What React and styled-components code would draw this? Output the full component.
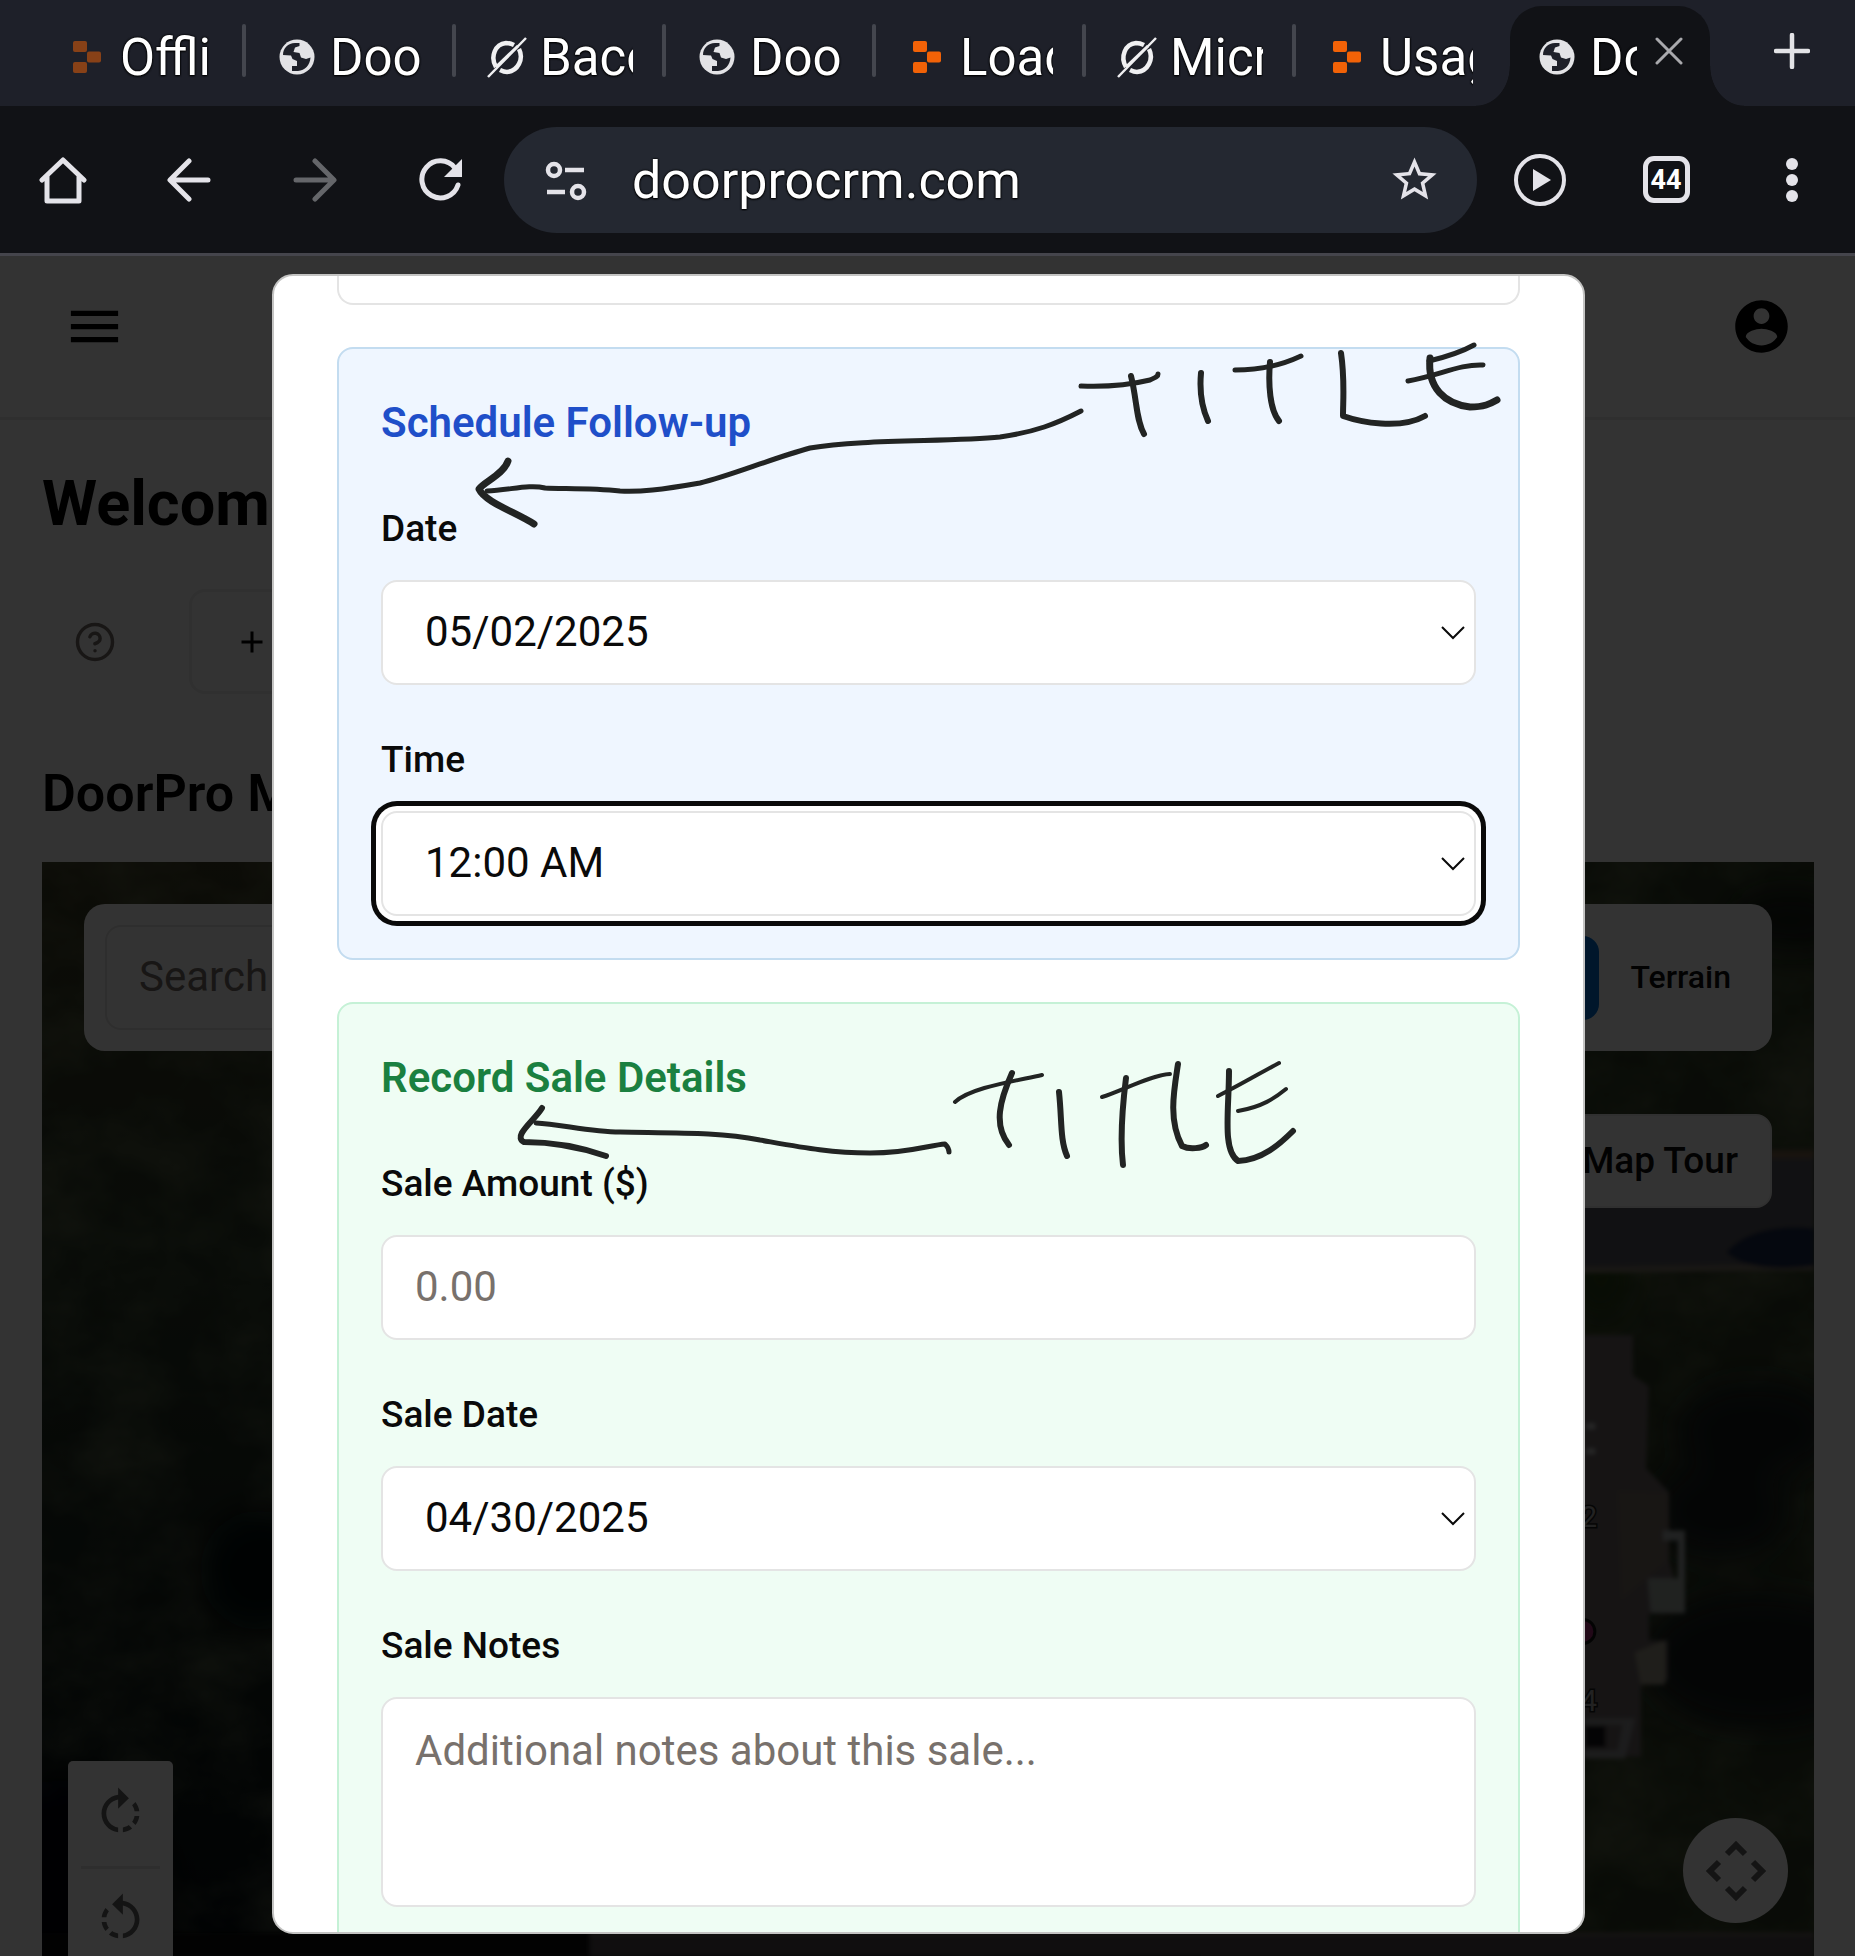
import React from "react";
import styled, { createGlobalStyle, css } from "styled-components";

const Global = createGlobalStyle`
  *, *::before, *::after { box-sizing: border-box; }
  html, body { margin: 0; background: #111216; }
  body { font-family: Roboto, "Liberation Sans", sans-serif; color: #0a0a0a; }
  button, input, select, textarea { font: inherit; color: inherit; margin: 0; }
  button { border: 0; background: none; padding: 0; cursor: pointer; }
  h1, h2, h3 { margin: 0; }
`;

const Screen = styled.div`
  display: flex;
  flex-direction: column;
  height: 100vh;
  overflow: hidden;
`;

/* ---------- browser chrome ---------- */

const outlined = css`
  text-shadow: 0 0 2px #000, 0 0 2px #000, 0 1px 2px #000;
`;

const TabStrip = styled.nav`
  display: flex;
  height: 106px;
  flex: none;
  padding-left: 36px;
  background: #1e2029;
  color: #fff;
`;

const Tab = styled.button`
  display: flex;
  align-items: center;
  width: 210px;
  height: 106px;
  padding: 8px 0 0 30px;
  position: relative;
  text-align: left;

  &::after {
    content: "";
    display: ${(p) => (p.$last ? "none" : "block")};
    position: absolute;
    right: 0;
    top: 24px;
    width: 4px;
    height: 53px;
    border-radius: 2px;
    background: #44464e;
  }
`;

const TabIcon = styled.span`
  display: flex;
  justify-content: center;
  width: 42px;
  flex: none;
  margin-right: 12px;
  opacity: ${(p) => (p.$dim ? 0.5 : 1)};
`;

const TabTitle = styled.span`
  width: ${(p) => (p.$short ? 47 : 93)}px;
  padding-top: 2px;
  overflow: hidden;
  white-space: nowrap;
  font-size: 51px;
  line-height: 64px;
  color: #fff;
  ${outlined}
`;

const ActiveTab = styled.div`
  display: flex;
  align-items: center;
  align-self: flex-end;
  position: relative;
  width: 200px;
  height: 100px;
  margin-left: 4px;
  padding: 2px 0 0 26px;
  border-radius: 32px 32px 0 0;
  background: #111216;

  &::before, &::after {
    content: "";
    position: absolute;
    bottom: 0;
    width: 34px;
    height: 40px;
  }
  &::before {
    right: 100%;
    background: radial-gradient(ellipse 34px 40px at 0 0, transparent 98%, #111216 100%);
  }
  &::after {
    left: 100%;
    background: radial-gradient(ellipse 34px 40px at 100% 0, transparent 98%, #111216 100%);
  }
`;

const CloseTab = styled.button`
  display: flex;
  margin: 0 0 12px 18px;
`;

const NewTab = styled.button`
  flex: 1;
  display: flex;
  align-items: center;
  justify-content: center;
  padding: 0 0 4px 18px;
`;

const Toolbar = styled.div`
  display: flex;
  align-items: center;
  height: 150px;
  flex: none;
  background: #111216;
  border-bottom: 3px solid #45454c;
`;

const ToolButton = styled.button`
  display: flex;
  align-items: center;
  justify-content: center;
  width: 126px;
  height: 126px;
  flex: none;
  color: ${(p) => (p.$muted ? "#65666a" : "#e4e3e9")};
`;

const AddressBar = styled.div`
  flex: 1;
  display: flex;
  align-items: center;
  height: 106px;
  min-width: 0;
  border-radius: 53px;
  background: #242831;
  color: #e4e3e9;
  padding: 0 36px 0 38px;
`;

const AddressInput = styled.input`
  flex: 1;
  min-width: 0;
  height: 80px;
  padding: 2px 0 0;
  margin-left: 40px;
  border: 0;
  outline: 0;
  background: transparent;
  color: #fff;
  font-size: 52px;
  ${outlined}
`;

const PlainButton = styled.button`
  display: flex;
`;

const TabCount = styled.span`
  display: flex;
  align-items: center;
  justify-content: center;
  width: 47px;
  height: 47px;
  border: 5px solid #e4e3e9;
  border-radius: 11px;
  color: #fff;
  font-size: 27px;
  font-weight: 700;
`;

/* ---------- page under the dialog ---------- */

const Viewport = styled.div`
  flex: 1;
  min-height: 0;
  display: grid;
  overflow: hidden;
`;

const Page = styled.main`
  grid-area: 1 / 1;
  display: flex;
  flex-direction: column;
  min-width: 0;
  min-height: 0;
  background: #fff;
`;

const PageHeader = styled.header`
  display: flex;
  justify-content: space-between;
  align-items: flex-start;
  height: 164px;
  flex: none;
  padding: 39px 62px 0 63px;
  border-bottom: 3px solid #ececec;
`;

const PageBody = styled.div`
  flex: 1;
  min-height: 0;
  display: flex;
  flex-direction: column;
  padding: 0 41px 0 42px;
`;

const Welcome = styled.h1`
  margin-top: 42px;
  font-size: 63px;
  line-height: 84px;
  font-weight: 700;
  color: #000;
`;

const Actions = styled.div`
  display: flex;
  align-items: center;
  gap: 42px;
  margin-top: 43px;
`;

const HelpButton = styled.button`
  display: flex;
  align-items: center;
  justify-content: center;
  width: 105px;
  height: 105px;
  color: #78716c;
`;

const AddButton = styled.button`
  display: flex;
  align-items: center;
  gap: 24px;
  height: 105px;
  padding: 0 42px;
  border: 3px solid #eeeeee;
  border-radius: 16px;
  font-size: 37px;
  font-weight: 500;
`;

const MapTitle = styled.h2`
  margin-top: 63px;
  font-size: 52px;
  line-height: 74px;
  font-weight: 600;
  color: #000;
`;

const MapFrame = styled.section`
  flex: 1;
  min-height: 0;
  display: grid;
  margin-top: 31px;
  overflow: hidden;
  background: #2a3424;
`;

const Aerial = styled.svg`
  grid-area: 1 / 1;
  display: block;
  width: 100%;
  height: 100%;
  min-height: 0;
`;

const MapControls = styled.div`
  grid-area: 1 / 1;
  position: relative;
  z-index: 1;
  display: flex;
  flex-direction: column;
  justify-content: space-between;
  min-height: 0;
`;

const MapTop = styled.div`
  display: flex;
  flex-direction: column;
  align-items: flex-end;
  gap: 63px;
  padding: 42px 42px 0;
`;

const SearchPanel = styled.div`
  display: flex;
  align-items: center;
  justify-content: space-between;
  align-self: stretch;
  padding: 21px;
  border-radius: 21px;
  background: #fff;
`;

const SearchInput = styled.input`
  width: 640px;
  height: 105px;
  padding: 0 32px 2px;
  border: 2px solid #e7e5e4;
  border-radius: 16px;
  background: #fff;
  font-size: 42px;
  &::placeholder { color: #78716c; opacity: 1; }
`;

const ModeGroup = styled.div`
  display: flex;
`;

const ModeButton = styled.button`
  height: 84px;
  padding: 0 20px 2px 32px;
  border-radius: 16px;
  font-size: 32px;
  font-weight: 500;
  ${(p) => p.$active && css`
    padding: 0 32px;
    background: #0070d6;
    color: #fff;
  `}
`;

const TourButton = styled.button`
  height: 94px;
  padding: 0 32px 2px;
  border: 2px solid #f0efee;
  border-radius: 16px;
  background: #fff;
  font-size: 37px;
  font-weight: 500;
`;

const MapBottom = styled.div`
  display: flex;
  justify-content: space-between;
  align-items: flex-start;
  height: 195px;
  padding: 0 26px;
  color: #666;
`;

const Rotator = styled.div`
  display: flex;
  flex-direction: column;
  align-items: center;
  width: 105px;
  height: 210px;
  border-radius: 5px;
  background: #fff;
`;

const RotateButton = styled.button`
  display: flex;
  align-items: center;
  justify-content: center;
  width: 79px;
  height: 106px;
  & + & { border-top: 3px solid #e6e6e6; }
`;

const PanButton = styled.button`
  display: flex;
  align-items: center;
  justify-content: center;
  width: 105px;
  height: 105px;
  margin-top: 57px;
  border-radius: 50%;
  background: #fff;
`;

/* ---------- dialog ---------- */

const Overlay = styled.div`
  grid-area: 1 / 1;
  position: relative;
  z-index: 2;
  display: flex;
  justify-content: center;
  min-height: 0;
  padding: 18px 19px 22px 21px;
  background: rgba(0, 0, 0, 0.8);
`;

const Dialog = styled.div`
  position: relative;
  display: flex;
  flex-direction: column;
  gap: 42px;
  width: 1313px;
  max-width: 100%;
  padding: 0 63px;
  border: 2px solid #c4c4c3;
  border-radius: 21px;
  background: #fff;
  overflow: hidden;
`;

const FieldTail = styled.div`
  height: 29px;
  flex: none;
  border: 2px solid #e4e4e4;
  border-top: 0;
  border-radius: 0 0 16px 16px;
`;

const tones = {
  blue: { edge: "#c3dcf0", fill: "#eff6ff", ink: "#1f4fc9" },
  green: { edge: "#c5f1d6", fill: "#effdf4", ink: "#1a8040" },
};

const Card = styled.section`
  display: flex;
  flex-direction: column;
  gap: 56px;
  flex: none;
  padding: 42px;
  border: 2px solid ${(p) => tones[p.$tone].edge};
  border-radius: 16px;
  background: ${(p) => tones[p.$tone].fill};
`;

const CardTitle = styled.h3`
  font-size: 42px;
  line-height: 63px;
  font-weight: 600;
  color: ${(p) => tones[p.$tone].ink};
`;

const Field = styled.div`
  display: flex;
  flex-direction: column;
  gap: 34px;
`;

const Label = styled.label`
  align-self: flex-start;
  padding-top: 2px;
  font-size: 37px;
  line-height: 34px;
  font-weight: 500;
`;

const control = css`
  width: 100%;
  border: 2px solid #e4e4e4;
  border-radius: 16px;
  background: #fff;
  color: #0a0a0a;
  font-size: 42px;
  outline: 0;
  &::placeholder { color: #78716c; opacity: 1; }
`;

const TextInput = styled.input`
  ${control}
  height: 105px;
  padding: 0 32px 2px;
`;

const TextArea = styled.textarea`
  ${control}
  display: block;
  height: 210px;
  padding: 21px 32px;
  line-height: 62px;
  resize: none;
`;

const SelectBox = styled.div`
  display: grid;
  align-items: center;
  & > * { grid-area: 1 / 1; }
  & > svg { justify-self: end; margin-right: 11px; pointer-events: none; }
`;

const Select = styled.select`
  ${control}
  appearance: none;
  height: 105px;
  padding: 0 42px 2px;
  ${(p) => p.$focused && css`
    box-shadow: 0 0 0 5px #fff, 0 0 0 10px #0a0a0a;
  `}
`;

const Ink = styled.svg`
  position: absolute;
  left: -2px;
  top: -2px;
  width: 1312px;
  height: 1660px;
  pointer-events: none;
  fill: none;
  stroke: #222423;
  stroke-width: 6;
  stroke-linecap: round;
  stroke-linejoin: round;
`;

/* ---------- icons ---------- */

const Globe = () => (
  <svg width="36" height="36" viewBox="0 0 36 36" aria-hidden="true">
    <circle cx="18" cy="18" r="17.500" fill="#e3e3e6" />
    <path
      d="M4 16C4 9 9 4 16 4h4.500v3L16 8.500 14.500 13l6 1 1.500 4.500 5 1.500 4.500-1.500C31 26 26 31.500 19 32h-6v-5h5v-5l-4.500-2L12 16.500z"
      fill="#1e2029"
    />
  </svg>
);

const Replit = () => (
  <svg width="28" height="32" viewBox="0 0 28 32" fill="#f26207" aria-hidden="true">
    <rect width="14" height="11" rx="2" />
    <rect x="14" y="10.500" width="14" height="11" rx="2" />
    <rect y="21" width="14" height="11" rx="2" />
  </svg>
);

const Slashed = () => (
  <svg width="42" height="42" viewBox="0 0 42 42" fill="none" stroke="#f0f0f2" aria-hidden="true">
    <path d="M10 31C4 21 9 8 20 7c4 0 6 1 8 2" strokeWidth="4.500" />
    <path d="M33 13c5 10-1 22-12 23-3 0-5-1-7-2" strokeWidth="4.500" />
    <path d="M2 41L40 2" strokeWidth="2.500" />
    <path d="M10 31L32 10" strokeWidth="3" />
  </svg>
);

const marks = { globe: Globe, replit: Replit, slashed: Slashed };

const Chevron = () => (
  <svg width="24" height="14" viewBox="0 0 24 14" fill="none" stroke="#0a0a0a" strokeWidth="2" aria-hidden="true">
    <path d="M1 1l11 11L23 1" />
  </svg>
);

const RotateIcon = ({ flip }) => (
  <svg width="57" height="57" viewBox="0 0 24 24" fill="currentColor" aria-hidden="true">
    <g transform={flip ? "matrix(-1 0 0 1 24 0)" : undefined}>
      <path d="M15.55 5.550L11 1v3.070C7.060 4.560 4 7.920 4 12s3.050 7.440 7 7.930v-2.020c-2.840-.48-5-2.940-5-5.910s2.160-5.430 5-5.910V10l4.550-4.450zM19.930 11c-.17-1.390-.72-2.730-1.620-3.890l-1.420 1.420c.54.75.88 1.600 1.020 2.470h2.020zM13 17.900v2.020c1.390-.17 2.740-.71 3.900-1.610l-1.440-1.440c-.75.54-1.590.89-2.460 1.030zm3.890-2.420l1.420 1.410c.9-1.160 1.450-2.500 1.620-3.890h-2.020c-.14.87-.48 1.720-1.020 2.480z" />
    </g>
  </svg>
);

const AerialImage = () => (
  <Aerial viewBox="42 862 1771 1094" preserveAspectRatio="xMidYMin slice" aria-hidden="true">
    <defs>
      <linearGradient id="field" x1="0" y1="0" x2="0" y2="1">
        <stop offset="0" stopColor="#3c3c24" />
        <stop offset="0.350" stopColor="#2c3a28" />
        <stop offset="0.700" stopColor="#18241c" />
        <stop offset="1" stopColor="#060e12" />
      </linearGradient>
      <filter id="soft" x="-30%" y="-30%" width="160%" height="160%">
        <feGaussianBlur stdDeviation="16" />
      </filter>
      <filter id="edge"><feGaussianBlur stdDeviation="2" /></filter>
      <filter id="grain" x="0" y="0" width="100%" height="100%">
        <feTurbulence type="fractalNoise" baseFrequency="0.012 0.016" numOctaves="4" seed="4" />
        <feColorMatrix values="0 0 0 0 0.280  0 0 0 0 0.320  0 0 0 0 0.170  1.400 0 0 0 -0.500" />
      </filter>
    </defs>
    <rect x="42" y="862" width="1771" height="1094" fill="url(#field)" />
    <rect x="1200" y="862" width="613" height="1094" fill="#2f3b24" />
    <rect x="42" y="862" width="1771" height="1094" filter="url(#grain)" opacity="0.500" />
    <g filter="url(#soft)">
      <ellipse cx="260" cy="1570" rx="60" ry="60" fill="#02070c" />
      <ellipse cx="60" cy="1900" rx="110" ry="120" fill="#010409" />
      <ellipse cx="1755" cy="1430" rx="80" ry="50" fill="#141f1c" />
      <ellipse cx="1760" cy="1660" rx="120" ry="70" fill="#141f1c" />
      <ellipse cx="1720" cy="1510" rx="70" ry="50" fill="#141f1c" />
      <ellipse cx="1790" cy="920" rx="60" ry="30" fill="#141a16" />
      <ellipse cx="1600" cy="1270" rx="30" ry="50" fill="#2c4419" />
    </g>
    <g filter="url(#edge)">
      <path d="M1500 1152H1813V1268H1500z" fill="#58585f" />
      <path d="M1500 1150H1813V1158H1500z" fill="#7a6148" />
      <path d="M1500 1268L1813 1264V1270L1500 1274z" fill="#7e7468" />
      <path d="M1725 1252c20-24 60-28 88-24v38c-30 4-70 4-88-14z" fill="#1d2a4c" />
      <path d="M1500 1335H1632V1375L1648 1386L1645 1468L1668 1492V1560L1684 1613H1648V1640H1667V1680H1640V1756H1500z" fill="#6e6566" />
      <path d="M1616 1490L1668 1492V1560L1620 1600z" fill="#786d66" />
      <path d="M1662 1530H1684V1612H1650L1647 1578H1677V1540H1662z" fill="#a3a8a7" />
      <path d="M1648 1580L1682 1578L1680 1612H1652z" fill="#a0a9a1" />
      <path d="M1634 1652L1664 1640V1684H1640z" fill="#9c9686" />
      <path d="M1584 1718H1634L1624 1758H1584V1750H1617L1622 1724H1584z" fill="#8f8f91" />
      <path d="M1584 1725H1605V1747H1584z" fill="#15171f" />
      <path d="M1586 1426h8M1586 1451h8" stroke="#c5c5c5" strokeWidth="5" />
      <path d="M42 1932H590V1956H42z" fill="#080d0c" />
      <path d="M590 1932H1813V1956H590z" fill="#50494b" />
      <path d="M590 1934H1813" stroke="#6b605c" strokeWidth="4" />
    </g>
    <g fill="#a8a8a8" stroke="#1c1c1c" strokeWidth="3" paintOrder="stroke" fontFamily="Roboto, sans-serif" fontSize="29">
      <text x="1580" y="1527">2</text>
      <text x="1580" y="1711">4</text>
    </g>
    <circle cx="1582" cy="1631" r="12" fill="#a32a72" stroke="#111" strokeWidth="3" />
  </Aerial>
);

/* ---------- data ---------- */

const tabs = [
  { mark: "replit", title: "Offli", dim: true },
  { mark: "globe", title: "Doo" },
  { mark: "slashed", title: "Baco" },
  { mark: "globe", title: "Doo" },
  { mark: "replit", title: "Load" },
  { mark: "slashed", title: "Micr" },
  { mark: "replit", title: "Usag" },
];

const SelectField = ({ id, label, value, focused }) => (
  <Field>
    <Label htmlFor={id}>{label}</Label>
    <SelectBox>
      <Select id={id} defaultValue={value} $focused={focused}>
        <option value={value}>{value}</option>
      </Select>
      <Chevron />
    </SelectBox>
  </Field>
);

export default function App() {
  return (
    <Screen>
      <Global />
      <TabStrip aria-label="Open tabs">
        {tabs.map((t, i) => {
          const Mark = marks[t.mark];
          return (
            <Tab key={i} $last={i === tabs.length - 1}>
              <TabIcon $dim={t.dim}><Mark /></TabIcon>
              <TabTitle>{t.title}</TabTitle>
            </Tab>
          );
        })}
        <ActiveTab>
          <TabIcon><Globe /></TabIcon>
          <TabTitle $short>Do</TabTitle>
          <CloseTab aria-label="Close tab">
            <svg width="28" height="28" viewBox="0 0 28 28" stroke="#a9a9ad" strokeWidth="3" strokeLinecap="round" aria-hidden="true">
              <path d="M2 2l24 24M26 2L2 26" />
            </svg>
          </CloseTab>
        </ActiveTab>
        <NewTab aria-label="New tab">
          <svg width="36" height="36" viewBox="0 0 36 36" stroke="#e3e3e6" strokeWidth="4.500" strokeLinecap="round" aria-hidden="true">
            <path d="M18 2v32M2 18h32" />
          </svg>
        </NewTab>
      </TabStrip>

      <Toolbar>
        <ToolButton aria-label="Home">
          <svg width="48" height="48" viewBox="0 0 48 48" fill="none" stroke="currentColor" strokeWidth="5" strokeLinejoin="round" strokeLinecap="round" aria-hidden="true">
            <path d="M8 20V45H40V20M3 24L24 4L45 24" />
          </svg>
        </ToolButton>
        <ToolButton aria-label="Back">
          <svg width="44" height="44" viewBox="0 0 44 44" fill="none" stroke="currentColor" strokeWidth="5" strokeLinecap="round" strokeLinejoin="round" aria-hidden="true">
            <path d="M41 22H4M22 3L3 22L22 41" />
          </svg>
        </ToolButton>
        <ToolButton aria-label="Forward" $muted>
          <svg width="44" height="44" viewBox="0 0 44 44" fill="none" stroke="currentColor" strokeWidth="5" strokeLinecap="round" strokeLinejoin="round" aria-hidden="true">
            <path d="M3 22H40M22 3L41 22L22 41" />
          </svg>
        </ToolButton>
        <ToolButton aria-label="Reload">
          <svg width="44" height="44" viewBox="0 0 44 44" fill="none" stroke="currentColor" strokeWidth="5" strokeLinecap="round" aria-hidden="true">
            <path d="M39 27A18.500 18.500 0 1 1 36 10" />
            <path d="M43 1V19H25z" fill="currentColor" stroke="none" />
          </svg>
        </ToolButton>
        <AddressBar>
          <PlainButton aria-label="Site settings">
            <svg width="50" height="42" viewBox="0 0 50 42" fill="none" stroke="currentColor" strokeWidth="4.500" aria-hidden="true">
              <circle cx="12" cy="11" r="6" />
              <path d="M23 11H42M5 33H23" />
              <circle cx="36" cy="33" r="6" />
            </svg>
          </PlainButton>
          <AddressInput aria-label="Address" defaultValue="doorprocrm.com" />
          <PlainButton aria-label="Bookmark">
            <svg width="53" height="53" viewBox="0 0 24 24" fill="currentColor" aria-hidden="true">
              <path d="M22 9.240l-7.190-.62L12 2 9.190 8.630 2 9.240l5.460 4.730L5.820 21 12 17.270 18.180 21l-1.630-7.030L22 9.240zM12 15.400l-3.760 2.270 1-4.280-3.320-2.880 4.380-.38L12 6.100l1.710 4.040 4.380.38-3.320 2.880 1 4.280L12 15.400z" />
            </svg>
          </PlainButton>
        </AddressBar>
        <ToolButton aria-label="Play">
          <svg width="54" height="54" viewBox="0 0 54 54" fill="none" stroke="currentColor" strokeWidth="4" aria-hidden="true">
            <circle cx="27" cy="27" r="24" />
            <path d="M20 16L38 27L20 38z" fill="currentColor" stroke="none" />
          </svg>
        </ToolButton>
        <ToolButton aria-label="Tabs"><TabCount>44</TabCount></ToolButton>
        <ToolButton aria-label="Menu">
          <svg width="12" height="44" viewBox="0 0 12 44" fill="currentColor" aria-hidden="true">
            <circle cx="6" cy="6" r="6" /><circle cx="6" cy="22" r="6" /><circle cx="6" cy="38" r="6" />
          </svg>
        </ToolButton>
      </Toolbar>

      <Viewport>
        <Page>
          <PageHeader>
            <PlainButton aria-label="Open navigation">
              <svg width="63" height="63" viewBox="0 0 24 24" aria-hidden="true"><path d="M3 18h18v-2H3v2zm0-5h18v-2H3v2zm0-7v2h18V6H3z" /></svg>
            </PlainButton>
            <PlainButton aria-label="Account">
              <svg width="63" height="63" viewBox="0 0 24 24" aria-hidden="true"><path d="M12 2C6.480 2 2 6.480 2 12s4.480 10 10 10 10-4.480 10-10S17.520 2 12 2zm0 3c1.660 0 3 1.340 3 3s-1.340 3-3 3-3-1.340-3-3 1.340-3 3-3zm0 14.200c-2.500 0-4.710-1.280-6-3.220.03-1.990 4-3.080 6-3.080 1.990 0 5.970 1.090 6 3.080-1.290 1.940-3.500 3.220-6 3.220z" /></svg>
            </PlainButton>
          </PageHeader>
          <PageBody>
            <Welcome>Welcome</Welcome>
            <Actions>
              <HelpButton aria-label="Help">
                <svg width="42" height="42" viewBox="0 0 24 24" fill="none" stroke="currentColor" strokeWidth="2" strokeLinecap="round" strokeLinejoin="round" aria-hidden="true">
                  <circle cx="12" cy="12" r="10" />
                  <path d="M9.090 9a3 3 0 0 1 5.830 1c0 2-3 3-3 3M12 17h.01" />
                </svg>
              </HelpButton>
              <AddButton>
                <svg width="36" height="36" viewBox="0 0 24 24" stroke="#000" strokeWidth="2" aria-hidden="true"><path d="M5 12h14M12 5v14" /></svg>
                Add
              </AddButton>
            </Actions>
            <MapTitle>DoorPro Map</MapTitle>
            <MapFrame>
              <AerialImage />
              <MapControls>
                <MapTop>
                  <SearchPanel>
                    <SearchInput aria-label="Search the map" placeholder="Search" />
                    <ModeGroup>
                      <ModeButton $active>Satellite</ModeButton>
                      <ModeButton>Terrain</ModeButton>
                    </ModeGroup>
                  </SearchPanel>
                  <TourButton>Map Tour</TourButton>
                </MapTop>
                <MapBottom>
                  <Rotator>
                    <RotateButton aria-label="Rotate clockwise"><RotateIcon /></RotateButton>
                    <RotateButton aria-label="Rotate counterclockwise"><RotateIcon flip /></RotateButton>
                  </Rotator>
                  <PanButton aria-label="Pan map">
                    <svg width="62" height="62" viewBox="0 0 62 62" fill="none" stroke="currentColor" strokeWidth="6" aria-hidden="true">
                      <path d="M22 14L31 5L40 14M22 48L31 57L40 48M14 22L5 31L14 40M48 22L57 31L48 40" />
                    </svg>
                  </PanButton>
                </MapBottom>
              </MapControls>
            </MapFrame>
          </PageBody>
        </Page>

        <Overlay>
          <Dialog role="dialog" aria-label="Property details">
            <FieldTail />
            <Card $tone="blue">
              <CardTitle $tone="blue">Schedule Follow-up</CardTitle>
              <SelectField id="follow-date" label="Date" value="05/02/2025" />
              <SelectField id="follow-time" label="Time" value="12:00 AM" focused />
            </Card>
            <Card $tone="green">
              <CardTitle $tone="green">Record Sale Details</CardTitle>
              <Field>
                <Label htmlFor="sale-amount">Sale Amount ($)</Label>
                <TextInput id="sale-amount" placeholder="0.00" />
              </Field>
              <SelectField id="sale-date" label="Sale Date" value="04/30/2025" />
              <Field>
                <Label htmlFor="sale-notes">Sale Notes</Label>
                <TextArea id="sale-notes" placeholder="Additional notes about this sale..." />
              </Field>
            </Card>
            <Ink viewBox="272 274 1312 1660" role="img" aria-label="Handwritten notes: TITLE, with arrows to both section titles">
              <g strokeWidth="5">
                <path d="M1081 411C1056 424 1035 432 1000 437C950 442 860 439 810 448C770 459 730 476 700 483C660 490 640 492 620 491C590 488 560 489 545 488C530 484 510 490 487 491" />
                <path d="M1081 386C1105 387 1125 386 1150 380C1157 377 1158 376 1158 374" />
                <path d="M1235 370C1260 370 1280 366 1301 356" />
                <path d="M1429 361C1450 356 1465 350 1474 345" />
                <path d="M1483 365C1460 364 1440 375 1408 381" />
              </g>
              <path strokeWidth="7" d="M508 461C504 474 484 482 479 489C485 502 515 512 534 524" />
              <path d="M1131 376C1137 400 1136 420 1144 434M1201 373C1199 395 1203 410 1208 421M1270 362C1268 385 1270 410 1279 421M1341 353C1345 380 1343 400 1343 416C1360 422 1400 430 1425 416" />
              <path strokeWidth="7" d="M1430 358C1427 388 1445 404 1470 407C1484 407 1490 404 1497 400" />
              <path strokeWidth="5" d="M536 1123C560 1124 590 1132 620 1132C680 1133 720 1132 760 1140C800 1147 830 1153 870 1153C910 1153 930 1145 945 1144C948 1147 949 1150 949 1152" />
              <path strokeWidth="6" d="M542 1108C535 1120 512 1136 524 1142C550 1142 580 1147 606 1156" />
              <g strokeWidth="4">
                <path d="M955 1102C970 1088 1010 1082 1042 1075M1102 1097C1120 1092 1150 1075 1170 1074M1218 1096C1240 1085 1262 1072 1279 1063M1238 1111C1262 1107 1275 1098 1286 1089" />
              </g>
              <path d="M1012 1073C1000 1100 993 1125 1009 1145M1059 1092C1062 1120 1060 1140 1067 1156M1126 1078C1122 1110 1120 1140 1123 1165M1178 1064C1174 1090 1168 1120 1182 1146C1190 1150 1202 1148 1206 1145M1229 1071C1229 1110 1222 1150 1238 1161C1262 1160 1280 1144 1293 1131" />
            </Ink>
          </Dialog>
        </Overlay>
      </Viewport>
    </Screen>
  );
}
